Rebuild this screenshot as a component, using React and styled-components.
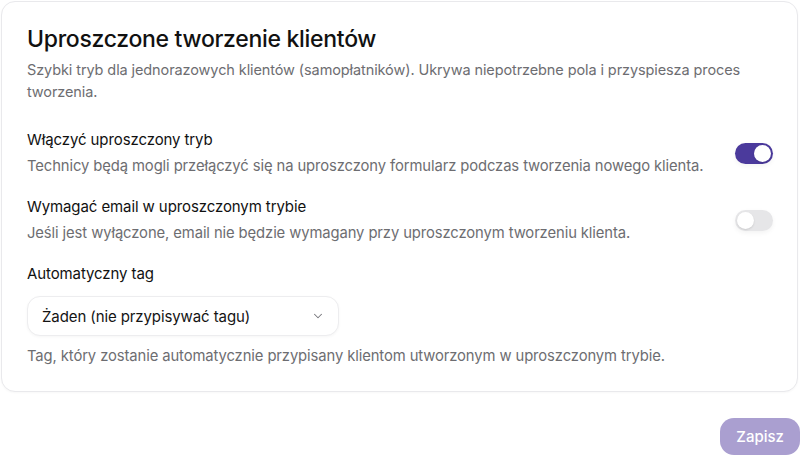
import React, { useState } from 'react'
import styled, { createGlobalStyle } from 'styled-components'

const GlobalStyle = createGlobalStyle`
    html, body {
        margin: 0;
        padding: 0;
        background: #ffffff;
    }
    body {
        font-family: Inter, "Noto Sans", sans-serif;
        color: #121212;
    }
    * {
        box-sizing: border-box;
    }
`

const Page = styled.div`
    padding: 1px 0 0 1px;
    display: flex;
    flex-direction: column;
`

const Card = styled.section`
    margin-right: 2px;
    border: 1px solid #e9e9ec;
    border-radius: 14px;
    padding: 21px 24px 24px 25px;
    background: #fff;
    box-shadow: 0 1px 2px rgba(0, 0, 0, 0.03);
`

const Title = styled.h2`
    margin: 0;
    font-size: 23px;
    line-height: 32px;
    font-weight: 500;
    letter-spacing: -0.3px;
    color: #111;
`

const Description = styled.p`
    margin: 4px 0 0;
    font-size: 14.5px;
    line-height: 22px;
    color: #6d6d71;
    letter-spacing: -0.1px;
`

const Rows = styled.div`
    display: flex;
    flex-direction: column;
    gap: 19px;
    margin-top: 26px;
`

const Row = styled.div`
    display: flex;
    align-items: center;
    justify-content: space-between;
    gap: 24px;
`

const RowText = styled.div`
    display: flex;
    flex-direction: column;
`

const Label = styled.div`
    font-size: 15px;
    line-height: 22px;
    font-weight: 400;
    color: #111;
    letter-spacing: -0.1px;
`

const Hint = styled(Description)`
    margin-top: ${p => p.gap || 4}px;
    font-size: 14.8px;
`

const Track = styled.button`
    position: relative;
    flex-shrink: 0;
    width: 38px;
    height: 21px;
    border: none;
    padding: 0;
    border-radius: 11px;
    cursor: pointer;
    background: ${p => (p.on ? '#4b3a9c' : '#e6e6e8')};
    box-shadow: 0 2px 5px rgba(0, 0, 0, 0.05);
`

const Knob = styled.span`
    position: absolute;
    top: 2px;
    left: ${p => (p.on ? '19px' : '2px')};
    width: 17px;
    height: 17px;
    border-radius: 50%;
    background: #fff;
    box-shadow: 0 1px 2px rgba(0, 0, 0, 0.12);
`

const TagBlock = styled.div`
    display: flex;
    flex-direction: column;
`

const Select = styled.button`
    margin-top: 11px;
    width: 312px;
    height: 40px;
    display: flex;
    align-items: center;
    justify-content: space-between;
    padding: 0 13px 0 14px;
    border: 1px solid #ededef;
    border-radius: 13px;
    background: #fff;
    box-shadow: 0 1px 3px rgba(0, 0, 0, 0.04);
    font-family: inherit;
    font-size: 15px;
    color: #141414;
    letter-spacing: -0.1px;
    cursor: pointer;
`

const Footer = styled.div`
    display: flex;
    justify-content: flex-end;
    margin-top: 26px;
`

const SaveButton = styled.button`
    height: 37px;
    padding: 0 16px;
    border: none;
    border-radius: 14px;
    background: #aa9fd0;
    color: #fff;
    font-family: inherit;
    font-size: 15px;
    font-weight: 500;
    cursor: not-allowed;
`

const Chevron = () => (
    <svg width="14" height="14" viewBox="0 0 24 24" fill="none" stroke="#77777c" strokeWidth="1.8" strokeLinecap="round" strokeLinejoin="round">
        <path d="m6 9 6 6 6-6" />
    </svg>
)

function Toggle({ on, onClick }) {
    return (
        <Track on={on ? 1 : 0} onClick={onClick} aria-pressed={on}>
            <Knob on={on ? 1 : 0} />
        </Track>
    )
}

export default function App() {
    const [simple, setSimple] = useState(true)
    const [email, setEmail] = useState(false)

    return (
        <Page>
            <GlobalStyle />
            <Card>
                <Title>Uproszczone tworzenie klientów</Title>
                <Description>
                    Szybki tryb dla jednorazowych klientów (samopłatników). Ukrywa niepotrzebne pola i przyspiesza proces tworzenia.
                </Description>
                <Rows>
                    <Row>
                        <RowText>
                            <Label>Włączyć uproszczony tryb</Label>
                            <Hint>Technicy będą mogli przełączyć się na uproszczony formularz podczas tworzenia nowego klienta.</Hint>
                        </RowText>
                        <Toggle on={simple} onClick={() => setSimple(!simple)} />
                    </Row>
                    <Row>
                        <RowText>
                            <Label>Wymagać email w uproszczonym trybie</Label>
                            <Hint>Jeśli jest wyłączone, email nie będzie wymagany przy uproszczonym tworzeniu klienta.</Hint>
                        </RowText>
                        <Toggle on={email} onClick={() => setEmail(!email)} />
                    </Row>
                    <TagBlock>
                        <Label>Automatyczny tag</Label>
                        <Select>
                            <span>Żaden (nie przypisywać tagu)</span>
                            <Chevron />
                        </Select>
                        <Hint gap={9}>Tag, który zostanie automatycznie przypisany klientom utworzonym w uproszczonym trybie.</Hint>
                    </TagBlock>
                </Rows>
            </Card>
            <Footer>
                <SaveButton disabled>Zapisz</SaveButton>
            </Footer>
        </Page>
    )
}
